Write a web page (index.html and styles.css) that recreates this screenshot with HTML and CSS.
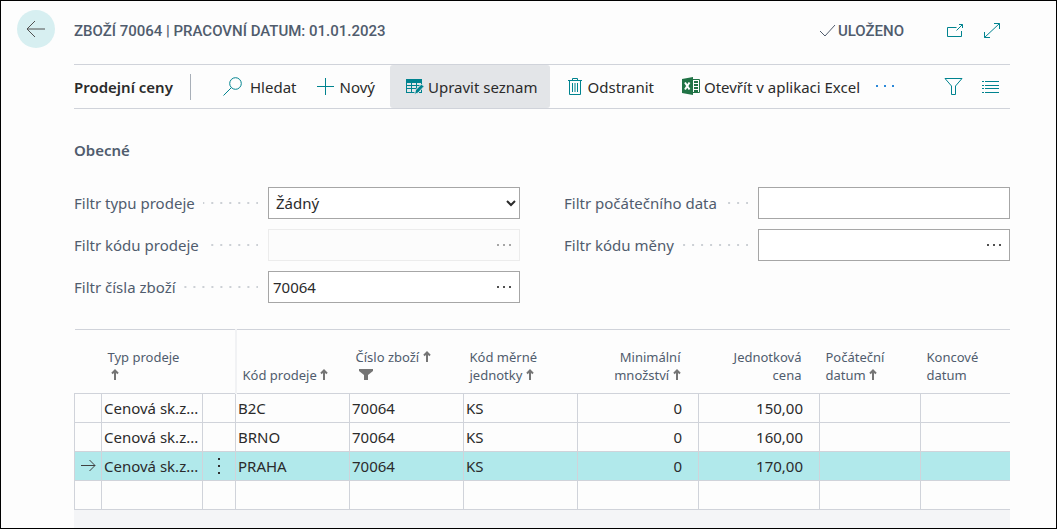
FILE: index.html
```html
<!DOCTYPE html>
<html lang="cs">
<head>
    <meta charset="UTF-8">
    <meta name="viewport" content="width=device-width, initial-scale=1">
    <title>Prodejní ceny</title>
    <link rel="stylesheet" href="styles.css">
</head>
<body>
<div class="page">
    <button class="back-button" type="button" aria-label="Zpět">
        <svg width="20" height="18" viewBox="0 0 20 18"><path d="M19 9H1.500M9 1L1 9l8 8"/></svg>
    </button>

    <main class="content">
        <!-- Page header -->
        <header class="page-header">
            <h1 class="page-title">ZBOŽÍ 70064 | PRACOVNÍ DATUM: 01.01.2023</h1>
            <span class="save-status">
                <svg width="17" height="13" viewBox="0 0 17 13"><path d="M1 7l5 5L16 1"/></svg>ULOŽENO
            </span>
            <button class="icon-button popout" type="button" aria-label="Otevřít v novém okně">
                <svg width="18" height="15" viewBox="0 0 18 15"><path d="M10.500 4.500h-9v9h14V8M10.500 7.500l6-6M13 1.500h3.500V5"/></svg>
            </button>
            <button class="icon-button" type="button" aria-label="Zvětšit">
                <svg width="18" height="17" viewBox="0 0 18 17"><path d="M1.500 15.500l15-14M11 1.500h5.500V7M1.500 10v5.500H7"/></svg>
            </button>
        </header>

        <!-- Action bar -->
        <nav class="toolbar">
            <h2 class="toolbar-title">Prodejní ceny</h2>
            <button class="action search" type="button">
                <svg width="20" height="19" viewBox="0 0 20 19"><circle cx="12.500" cy="6.500" r="5.800"/><path d="M8.300 10.700L.5 18.500"/></svg>Hledat
            </button>
            <button class="action new" type="button">
                <svg width="17" height="17" viewBox="0 0 17 17"><path d="M8.500 0v17M0 8.500h17"/></svg>Nový
            </button>
            <button class="action active" type="button">
                <svg width="18" height="17" viewBox="0 0 18 17">
                    <path class="solid" fill-rule="evenodd" d="M0 1h16v14H0zM1 5v2h4V5zM6 5v2h4V5zM11 5v2h4V5zM1 8v2h4V8zM6 8v2h4V8zM11 8v2h4V8zM1 11v3h4v-3zM6 11v3h4v-3zM11 11v3h4v-3z"/>
                    <path class="pencil" d="M8.500 16.500l1-4.500 6-6L18 8.500l-6 6.500z"/>
                </svg>Upravit seznam
            </button>
            <button class="action delete" type="button">
                <svg width="14" height="17" viewBox="0 0 14 17"><path d="M0 2.500h14M4.500 2V.500h5V2M1.500 3v13.500h11V3M4.500 5v9M7 5v9M9.500 5v9"/></svg>Odstranit
            </button>
            <button class="action excel" type="button">
                <svg width="18" height="19" viewBox="0 0 18 19">
                    <path class="sheet" d="M10 2.500h7.500v13H10z"/>
                    <path class="sheet-lines" d="M12 5h4M12 8h4M12 11h4M12 14h4"/>
                    <path class="cover" d="M0 2l11-2v18L0 16z"/>
                    <path class="cross" d="M3 5.500l4.500 7M7.500 5.500L3 12.500"/>
                </svg>Otevřít v aplikaci Excel
            </button>
            <button class="action more" type="button" aria-label="Další možnosti">
                <svg width="18" height="3" viewBox="0 0 18 3"><path d="M0 0h2v2H0zM8 0h2v2H8zM16 0h2v2h-2z"/></svg>
            </button>
            <button class="icon-button filter" type="button" aria-label="Filtr">
                <svg width="19" height="17" viewBox="0 0 19 17"><path d="M1 .5h17l-6.500 7.500v8.500h-4V8z"/></svg>
            </button>
            <button class="icon-button" type="button" aria-label="Zobrazit jako seznam">
                <svg width="17" height="13" viewBox="0 0 17 13"><path d="M0 1.500h2M3 1.500h14M0 5.500h2M3 5.500h14M0 8.500h2M3 8.500h14M0 12.500h2M3 12.500h14"/></svg>
            </button>
        </nav>

        <!-- Filter fields -->
        <h3 class="section-title">Obecné</h3>
        <form class="filters">
            <div class="filter-column">
                <div class="field">
                    <label for="sales-type">Filtr typu prodeje</label>
                    <span class="leader"></span>
                    <select class="field-box" id="sales-type">
                        <option>Žádný</option>
                    </select>
                </div>
                <div class="field">
                    <label for="sales-code">Filtr kódu prodeje</label>
                    <span class="leader"></span>
                    <div class="field-box disabled">
                        <input type="text" id="sales-code" disabled>
                        <button class="lookup" type="button" aria-label="Vybrat kód prodeje" disabled>
                            <svg width="14" height="2" viewBox="0 0 14 2"><path d="M0 0h2v2H0zM6 0h2v2H6zM12 0h2v2h-2z"/></svg>
                        </button>
                    </div>
                </div>
                <div class="field">
                    <label for="item-no">Filtr čísla zboží</label>
                    <span class="leader"></span>
                    <div class="field-box">
                        <input type="text" id="item-no" value="70064">
                        <button class="lookup" type="button" aria-label="Vybrat zboží">
                            <svg width="14" height="2" viewBox="0 0 14 2"><path d="M0 0h2v2H0zM6 0h2v2H6zM12 0h2v2h-2z"/></svg>
                        </button>
                    </div>
                </div>
            </div>
            <div class="filter-column">
                <div class="field">
                    <label for="start-date">Filtr počátečního data</label>
                    <span class="leader"></span>
                    <div class="field-box">
                        <input type="text" id="start-date">
                    </div>
                </div>
                <div class="field">
                    <label for="currency">Filtr kódu měny</label>
                    <span class="leader"></span>
                    <div class="field-box">
                        <input type="text" id="currency">
                        <button class="lookup" type="button" aria-label="Vybrat měnu">
                            <svg width="14" height="2" viewBox="0 0 14 2"><path d="M0 0h2v2H0zM6 0h2v2H6zM12 0h2v2h-2z"/></svg>
                        </button>
                    </div>
                </div>
            </div>
        </form>

        <!-- Price list -->
        <div class="table-wrap">
            <table class="prices">
                <colgroup>
                    <col class="col-marker">
                    <col class="col-type">
                    <col class="col-menu">
                    <col class="col-code">
                    <col class="col-code">
                    <col class="col-code">
                    <col class="col-number">
                    <col class="col-number">
                    <col class="col-type">
                    <col>
                </colgroup>
                <thead>
                    <tr>
                        <th></th>
                        <th>Typ prodeje<br><svg class="sort lead" width="8" height="11" viewBox="0 0 8 11"><path d="M4 11V1M1 4.500l3-3 3 3"/></svg></th>
                        <th class="frozen-edge"></th>
                        <th>Kód prodeje <svg class="sort" width="8" height="11" viewBox="0 0 8 11"><path d="M4 11V1M1 4.500l3-3 3 3"/></svg></th>
                        <th>Číslo zboží <svg class="sort" width="8" height="11" viewBox="0 0 8 11"><path d="M4 11V1M1 4.500l3-3 3 3"/></svg><br><svg class="funnel lead" width="14" height="11" viewBox="0 0 14 11"><path d="M0 0h14v2L9 6v5H5V6L0 2z"/></svg></th>
                        <th>Kód měrné<br>jednotky <svg class="sort" width="8" height="11" viewBox="0 0 8 11"><path d="M4 11V1M1 4.500l3-3 3 3"/></svg></th>
                        <th class="number">Minimální<br>množství <svg class="sort" width="8" height="11" viewBox="0 0 8 11"><path d="M4 11V1M1 4.500l3-3 3 3"/></svg></th>
                        <th class="number">Jednotková<br>cena</th>
                        <th>Počáteční<br>datum <svg class="sort" width="8" height="11" viewBox="0 0 8 11"><path d="M4 11V1M1 4.500l3-3 3 3"/></svg></th>
                        <th>Koncové<br>datum</th>
                    </tr>
                </thead>
                <tbody>
                    <tr>
                        <td></td>
                        <td>Cenová sk.z...</td>
                        <td></td>
                        <td>B2C</td>
                        <td>70064</td>
                        <td>KS</td>
                        <td class="number">0</td>
                        <td class="number">150,00</td>
                        <td></td>
                        <td></td>
                    </tr>
                    <tr>
                        <td></td>
                        <td>Cenová sk.z...</td>
                        <td></td>
                        <td>BRNO</td>
                        <td>70064</td>
                        <td>KS</td>
                        <td class="number">0</td>
                        <td class="number">160,00</td>
                        <td></td>
                        <td></td>
                    </tr>
                    <tr class="selected">
                        <td class="icon-cell"><svg class="row-arrow" width="15" height="12" viewBox="0 0 15 12"><path d="M0 5.500h14M8.500 0L14 5.500 8.500 11"/></svg></td>
                        <td>Cenová sk.z...</td>
                        <td class="icon-cell">
                            <button class="row-menu" type="button" aria-label="Další možnosti řádku">
                                <svg width="2" height="16" viewBox="0 0 2 16"><path d="M0 0h2v2H0zM0 7h2v2H0zM0 14h2v2H0z"/></svg>
                            </button>
                        </td>
                        <td>PRAHA</td>
                        <td>70064</td>
                        <td>KS</td>
                        <td class="number">0</td>
                        <td class="number">170,00</td>
                        <td></td>
                        <td></td>
                    </tr>
                    <tr>
                        <td></td>
                        <td></td>
                        <td></td>
                        <td></td>
                        <td></td>
                        <td></td>
                        <td></td>
                        <td></td>
                        <td></td>
                        <td></td>
                    </tr>
                </tbody>
            </table>
        </div>
    </main>
</div>
</body>
</html>
```
FILE: styles.css
```css
* {
    box-sizing: border-box;
}

body {
    margin: 0;
    font-family: "Noto Sans", "Open Sans", sans-serif;
    font-size: 15px;
    color: #2b2b2b;
    background-color: #fdfdfd;
}

h1, h2, h3 {
    margin: 0;
    font-size: 15px;
}

button {
    margin: 0;
    padding: 0;
    border: none;
    background: none;
    color: inherit;
    font: inherit;
    cursor: pointer;
}

svg {
    display: block;
    flex: none;
    fill: none;
    stroke: #00838f;
    stroke-width: 1;
}

/* Page frame */
.page {
    display: flex;
    gap: 19px;
    min-height: 100vh;
    padding: 0 46px 0 16px;
    border: 1px solid #000;
}

.content {
    display: flex;
    flex: 1;
    flex-direction: column;
    min-width: 0;
}

.back-button {
    display: flex;
    flex: none;
    align-items: center;
    justify-content: center;
    width: 38px;
    height: 38px;
    margin-top: 9px;
    border-radius: 50%;
    background-color: #d7eff1;
}

.back-button svg {
    stroke: #505050;
}

/* Page header */
.page-header {
    display: flex;
    align-items: center;
    height: 63px;
    padding: 0 9px 4px 0;
    color: #505c6d;
    font-family: Roboto, sans-serif;
    font-weight: 500;
}

.page-title {
    flex: 1;
    font-weight: 500;
}

.save-status {
    display: flex;
    align-items: center;
    gap: 2px;
}

.save-status svg {
    stroke: #505c6d;
}

.popout {
    margin: 0 19px 0 42px;
}

/* Action bar */
.toolbar {
    display: flex;
    align-items: center;
    height: 45px;
    padding-right: 11px;
    border-top: 1px solid #d0d3da;
    border-bottom: 1px solid #d0d3da;
}

.toolbar-title {
    width: 117px;
    margin-right: 16px;
    border-right: 1px solid #a8afb8;
    font-weight: 600;
    line-height: 26px;
}

.action {
    display: flex;
    align-items: center;
    height: 43px;
    padding: 0 16px;
    white-space: nowrap;
}

.search {
    gap: 7px;
}

.new {
    gap: 6px;
    padding: 0 15px 0 4px;
}

.active {
    gap: 4px;
    padding-right: 12px;
    border-radius: 3px;
    background-color: #e3e5e8;
}

.delete {
    gap: 6px;
    padding: 0 14px 0 18px;
}

.excel {
    gap: 4px;
    padding-left: 14px;
}

.solid {
    fill: #00838f;
    stroke: none;
}

.pencil {
    fill: #00838f;
    stroke: #e3e5e8;
}

.sheet {
    fill: #fff;
    stroke: #217346;
}

.sheet-lines {
    stroke: #217346;
    stroke-width: 2;
}

.cover {
    fill: #217346;
    stroke: none;
}

.cross {
    stroke: #fff;
    stroke-width: 2;
}

.more {
    padding: 0;
}

.more path {
    fill: #2b88d8;
    stroke: none;
}

.filter {
    margin: 0 19px 0 auto;
}

/* Filter fields */
.section-title {
    margin: 30px 0 26px;
    color: #505c6d;
    font-weight: 600;
    line-height: 22px;
}

.filters {
    display: grid;
    grid-template-columns: 1fr 1fr;
    gap: 44px;
    margin-bottom: 26px;
}

.filter-column {
    display: flex;
    flex-direction: column;
    gap: 10px;
}

.field {
    display: flex;
    align-items: center;
    height: 32px;
    color: #505c6d;
}

.leader {
    flex: 1;
    height: 2px;
    margin: 0 10px 0 8px;
    background: linear-gradient(to left, #ccd0d5 2px, transparent 2px) right / 9px 2px repeat-x;
}

.field-box {
    display: flex;
    flex: none;
    width: 252px;
    height: 32px;
    border: 1px solid #a6a6a6;
    border-radius: 0;
    background-color: #fff;
    color: #2b2b2b;
    font: inherit;
}

.field-box input {
    flex: 1;
    min-width: 0;
    padding: 0 4px;
    border: none;
    background: none;
    color: inherit;
    font: inherit;
}

select.field-box {
    padding: 0 6px 0 3px;
}

.disabled {
    border-color: #ececec;
    background-color: #fcfcfc;
}

.lookup {
    display: flex;
    align-items: center;
    padding: 0 8px;
}

.lookup path {
    fill: #505050;
    stroke: none;
}

.disabled .lookup path {
    fill: #a6a6a6;
}

/* Price list */
.table-wrap {
    flex: 1;
    background-color: #f4f5f7;
}

.prices {
    width: 100%;
    border-collapse: collapse;
    border-top: 1px solid #d0d3da;
    background-color: #fdfdfd;
    table-layout: fixed;
}

.col-marker {
    width: 27px;
}

.col-type {
    width: 101px;
}

.col-menu {
    width: 33px;
}

.col-code {
    width: 114px;
}

.col-number {
    width: 121px;
}

.prices th {
    height: 64px;
    padding: 0 6px 9px;
    color: #505c6d;
    font-size: 13px;
    font-weight: 400;
    line-height: 18px;
    text-align: left;
    vertical-align: bottom;
    white-space: nowrap;
}

.prices .frozen-edge {
    border-right: 2px solid #f1f2f4;
}

.prices td {
    height: 29px;
    padding: 0 2px;
    border: 1px solid #d0d3da;
    line-height: 28px;
    white-space: nowrap;
}

.prices td:last-child {
    border-right: none;
}

.prices th.number {
    padding-right: 18px;
    text-align: right;
}

.prices td.number {
    padding-right: 16px;
    text-align: right;
}

.prices .icon-cell {
    padding: 0;
}

.selected {
    background-color: #b1e9eb;
}

.sort,
.funnel {
    display: inline-block;
}

.sort {
    stroke: #757575;
    stroke-width: 2;
}

.funnel {
    fill: #757575;
    stroke: none;
}

.lead {
    margin-left: 3px;
}

.row-arrow {
    margin: auto;
    stroke: #404040;
}

.row-menu {
    display: flex;
    align-items: center;
    justify-content: center;
    width: 100%;
    height: 28px;
}

.row-menu path {
    fill: #303030;
    stroke: none;
}
```
